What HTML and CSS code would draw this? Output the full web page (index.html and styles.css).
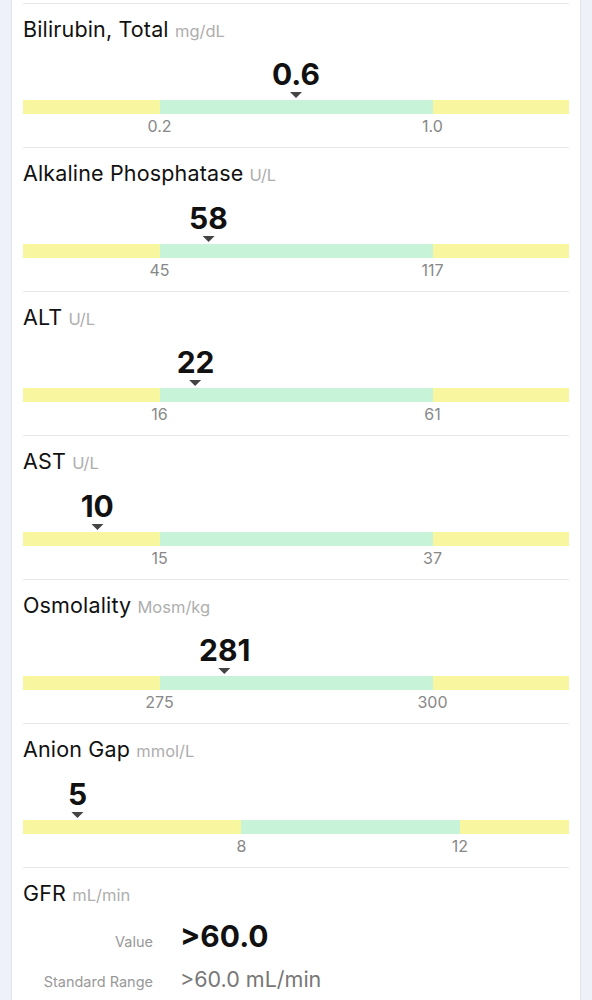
FILE: index.html
```html
<!DOCTYPE html>
<html>
  <head>
    <title>Lab Results</title>
    <link rel="stylesheet" href="styles.css">
  </head>
  <body>
    <div class="card">
      <div class="result">
        <div class="result-title">Bilirubin, Total <span class="unit">mg/dL</span></div>
        <div class="gauge">
          <div class="marker" style="left: 50%"><span class="marker-value">0.6</span><span class="marker-arrow"></span></div>
          <div class="bar">
            <span class="seg low" style="width: 25%"></span>
            <span class="seg normal" style="width: 50%"></span>
            <span class="seg high" style="width: 25%"></span>
          </div>
          <div class="ticks">
            <span class="tick" style="left: 25%">0.2</span>
            <span class="tick" style="left: 75%">1.0</span>
          </div>
        </div>
      </div>

      <div class="result">
        <div class="result-title">Alkaline Phosphatase <span class="unit">U/L</span></div>
        <div class="gauge">
          <div class="marker" style="left: 33.97%"><span class="marker-value">58</span><span class="marker-arrow"></span></div>
          <div class="bar">
            <span class="seg low" style="width: 25%"></span>
            <span class="seg normal" style="width: 50%"></span>
            <span class="seg high" style="width: 25%"></span>
          </div>
          <div class="ticks">
            <span class="tick" style="left: 25%">45</span>
            <span class="tick" style="left: 75%">117</span>
          </div>
        </div>
      </div>

      <div class="result">
        <div class="result-title">ALT <span class="unit">U/L</span></div>
        <div class="gauge">
          <div class="marker" style="left: 31.6%"><span class="marker-value">22</span><span class="marker-arrow"></span></div>
          <div class="bar">
            <span class="seg low" style="width: 25%"></span>
            <span class="seg normal" style="width: 50%"></span>
            <span class="seg high" style="width: 25%"></span>
          </div>
          <div class="ticks">
            <span class="tick" style="left: 25%">16</span>
            <span class="tick" style="left: 75%">61</span>
          </div>
        </div>
      </div>

      <div class="result">
        <div class="result-title">AST <span class="unit">U/L</span></div>
        <div class="gauge">
          <div class="marker" style="left: 13.6%"><span class="marker-value">10</span><span class="marker-arrow"></span></div>
          <div class="bar">
            <span class="seg low" style="width: 25%"></span>
            <span class="seg normal" style="width: 50%"></span>
            <span class="seg high" style="width: 25%"></span>
          </div>
          <div class="ticks">
            <span class="tick" style="left: 25%">15</span>
            <span class="tick" style="left: 75%">37</span>
          </div>
        </div>
      </div>

      <div class="result">
        <div class="result-title">Osmolality <span class="unit">Mosm/kg</span></div>
        <div class="gauge">
          <div class="marker" style="left: 36.96%"><span class="marker-value">281</span><span class="marker-arrow"></span></div>
          <div class="bar">
            <span class="seg low" style="width: 25%"></span>
            <span class="seg normal" style="width: 50%"></span>
            <span class="seg high" style="width: 25%"></span>
          </div>
          <div class="ticks">
            <span class="tick" style="left: 25%">275</span>
            <span class="tick" style="left: 75%">300</span>
          </div>
        </div>
      </div>

      <div class="result">
        <div class="result-title">Anion Gap <span class="unit">mmol/L</span></div>
        <div class="gauge">
          <div class="marker" style="left: 10%"><span class="marker-value">5</span><span class="marker-arrow"></span></div>
          <div class="bar">
            <span class="seg low" style="width: 40%"></span>
            <span class="seg normal" style="width: 40%"></span>
            <span class="seg high" style="width: 20%"></span>
          </div>
          <div class="ticks">
            <span class="tick" style="left: 40%">8</span>
            <span class="tick" style="left: 80%">12</span>
          </div>
        </div>
      </div>

      <div class="result result-plain">
        <div class="result-title">GFR <span class="unit">mL/min</span></div>
        <div class="detail">
          <span class="detail-label">Value</span>
          <span class="detail-value">&gt;60.0</span>
          <span class="detail-label">Standard Range</span>
          <span class="detail-range">&gt;60.0 mL/min</span>
        </div>
      </div>
    </div>
  </body>
</html>
```

FILE: styles.css
```css
body {
  margin: 0;
  font-family: Inter, "Liberation Sans", Arial, sans-serif;
  background-color: #eef1fa;
  color: #111;
}
.card {
  margin: 0 11px 0 11px;
  padding: 3px 11px 0 11px;
  background-color: #fff;
  border-left: 1px solid #e2e5ec;
  border-right: 1px solid #e2e5ec;
  min-height: 1000px;
  box-sizing: border-box;
}
.result {
  height: 144px;
  box-sizing: border-box;
  border-top: 1px solid #e9e9ec;
  padding-top: 12px;
}
.result-title {
  font-size: 21.5px;
  letter-spacing: 0.15px;
  line-height: 26px;
}
.unit {
  font-size: 16.5px;
  letter-spacing: 0;
  color: #aeaeae;
}
.gauge {
  position: relative;
  margin-top: 14px;
  padding-top: 42px;
}
.marker {
  position: absolute;
  top: 0;
  display: flex;
  flex-direction: column;
  align-items: center;
  transform: translateX(-50%);
}
.marker-value {
  font-size: 30px;
  font-weight: 700;
  line-height: 32px;
}
.marker-arrow {
  margin-top: 2px;
  width: 0;
  height: 0;
  border-left: 6px solid transparent;
  border-right: 6px solid transparent;
  border-top: 6px solid #444;
}
.bar {
  display: flex;
  height: 14px;
}
.seg.low,
.seg.high {
  background-color: #f8f7a0;
}
.seg.normal {
  background-color: #c7f3d8;
}
.ticks {
  position: relative;
  height: 20px;
}
.tick {
  position: absolute;
  top: 3px;
  transform: translateX(-50%);
  font-size: 16px;
  line-height: 18px;
  color: #888;
}
.detail {
  display: grid;
  grid-template-columns: 130px auto;
  column-gap: 27px;
  row-gap: 12px;
  align-items: baseline;
  margin-top: 10px;
}
.detail-label {
  text-align: right;
  font-size: 14.5px;
  color: #999;
}
.detail-value {
  font-size: 30px;
  font-weight: 700;
  line-height: 36px;
}
.detail-range {
  font-size: 21.5px;
  color: #777;
}
```
